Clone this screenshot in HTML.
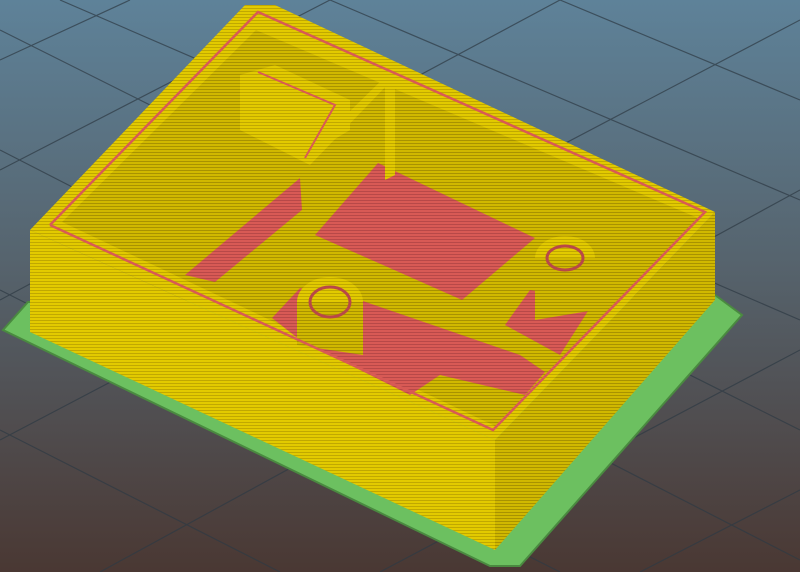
<!DOCTYPE html>
<html><head><style>
html,body{margin:0;padding:0;width:800px;height:572px;overflow:hidden;background:#555}
svg{display:block}
</style></head><body>
<svg width="800" height="572" viewBox="0 0 800 572" xmlns="http://www.w3.org/2000/svg">
<defs>
<linearGradient id="bg" x1="0" y1="0" x2="0" y2="1">
<stop offset="0" stop-color="#5e8299"/>
<stop offset="0.45" stop-color="#56646e"/>
<stop offset="1" stop-color="#4a3833"/>
</linearGradient>
<pattern id="yl" width="4" height="3" patternUnits="userSpaceOnUse">
<rect width="4" height="3" fill="#e2ca00"/>
<rect y="2" width="4" height="1" fill="#c0a800"/>
</pattern>
<pattern id="yd" width="4" height="3" patternUnits="userSpaceOnUse">
<rect width="4" height="3" fill="#d0b800"/>
<rect y="2" width="4" height="1" fill="#a89200"/>
</pattern>
<pattern id="rd" width="4" height="3" patternUnits="userSpaceOnUse">
<rect width="4" height="3" fill="#d85a55"/>
<rect y="2" width="4" height="1" fill="#b84848"/>
</pattern>
</defs>
<rect width="800" height="572" fill="url(#bg)"/>
<g stroke="#2e3a44" stroke-width="1.2" fill="none" opacity="0.7">
<path d="M0,60 L130,0 M0,170 L330,0 M0,300 L560,0 M0,440 L800,20 M100,572 L800,190 M380,572 L800,350 M640,572 L800,490"/>
<path d="M60,0 L800,320 M330,0 L800,200 M560,0 L800,100 M0,30 L800,430 M0,150 L800,560 M0,290 L560,572 M0,430 L280,572"/>
</g>
<polygon points="3,330 28,302 715,295 742,315 520,566 490,566" fill="#6cc060" stroke="#4a8a40" stroke-width="2"/>
<polygon points="30,230 495,440 495,550 30,332" fill="url(#yl)"/>
<polygon points="495,440 715,212 715,300 495,550" fill="url(#yd)"/>
<polygon points="30,230 245,5 275,5 715,212 495,440" fill="url(#yl)"/>
<polygon points="62,222 256,30 698,218 495,426" fill="url(#yd)"/>
<polygon points="315,235 378,163 535,238 462,300" fill="url(#rd)"/>
<polygon points="272,318 300,288 360,300 520,355 545,372 525,395 440,375 410,395 300,340" fill="url(#rd)"/>
<polygon points="185,275 300,178 302,210 215,282" fill="url(#rd)"/>
<polygon points="505,325 530,290 595,300 560,355" fill="url(#rd)"/>
<polygon points="385,75 395,70 395,175 385,180" fill="url(#yl)"/>
<polygon points="300,160 390,72 392,80 310,165" fill="url(#yl)"/>
<polygon points="240,75 275,65 350,100 350,130 300,160 240,130" fill="url(#yl)"/>
<ellipse cx="330" cy="302" rx="33" ry="25" fill="url(#yl)"/>
<polygon points="297,302 363,302 363,355 297,345" fill="url(#yd)"/>
<ellipse cx="330" cy="302" rx="20" ry="15" fill="none" stroke="#b84848" stroke-width="3"/>
<ellipse cx="565" cy="258" rx="30" ry="22" fill="url(#yl)"/>
<polygon points="535,258 595,258 595,310 535,320" fill="url(#yd)"/>
<ellipse cx="565" cy="258" rx="18" ry="12" fill="none" stroke="#b84848" stroke-width="3"/>
<polyline points="50,225 258,12 705,212 493,430 50,225" fill="none" stroke="#d85a55" stroke-width="2.5"/>
<polyline points="258,72 335,105 305,158" fill="none" stroke="#d85a55" stroke-width="2"/>
</svg>
</body></html>
